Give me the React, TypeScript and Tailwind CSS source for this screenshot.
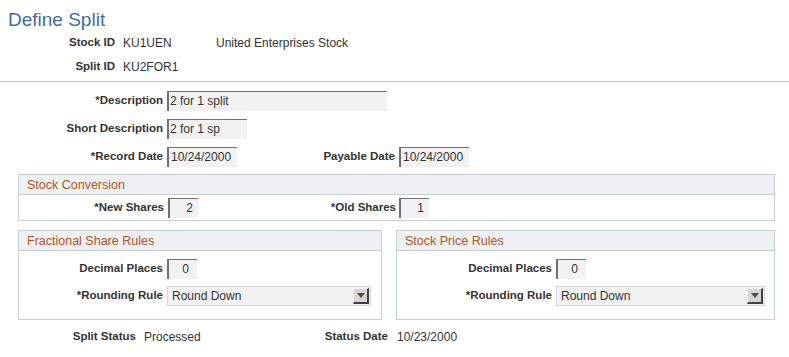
import React from "react";

function Field({ value, className }: { value: string; className: string }) {
  return (
    <div
      className={
        "h-[20px] bg-[#f2f2f2] border-t border-l-2 border-t-[#707070] border-l-[#707070] leading-[19px] text-[12px] font-normal text-[#333] " +
        className
      }
    >
      {value}
    </div>
  );
}

function Select({ value, className }: { value: string; className: string }) {
  return (
    <div
      className={
        "h-[20px] flex items-center bg-[#f2f2f2] border border-[#d6d6d6] " +
        className
      }
    >
      <div className="flex-1 pl-[4px] text-[12px] leading-[18px]">{value}</div>
      <div className="w-[16px] h-[16px] mr-[1px] flex items-center justify-center bg-[#d8d6d0] border-t border-l border-t-[#f4f4f4] border-l-[#f4f4f4] border-r-2 border-b-2 border-r-[#404040] border-b-[#404040]">
        <svg width="8" height="5" viewBox="0 0 8 5">
          <path d="M0 0 L8 0 L4 5 Z" fill="#4a4a4a" />
        </svg>
      </div>
    </div>
  );
}

function Box({
  title,
  className,
  children,
}: {
  title: string;
  className: string;
  children: React.ReactNode;
}) {
  return (
    <div className={"border border-[#c8cfd5] " + className}>
      <div className="h-[20px] bg-[#edf1f4] border-b border-[#c8cfd5] pl-[8px] text-[12.5px] leading-[20px] text-[#b4541e]">
        {title}
      </div>
      {children}
    </div>
  );
}

function App() {
  return (
    <div className="w-[789px] h-[357px] bg-white overflow-hidden font-['Liberation_Sans',Arial,sans-serif] text-[12px] text-[#333]">
      <div className="pt-[8px] pl-[8px] text-[19px] leading-[23px] text-[#416ca3]">
        Define Split
      </div>

      <div className="flex items-center h-[24px]">
        <div className="w-[115px] text-right font-bold text-[11.5px]">Stock ID</div>
        <div className="ml-[8px] w-[93px]">KU1UEN</div>
        <div>United Enterprises Stock</div>
      </div>
      <div className="flex items-center h-[24px]">
        <div className="w-[115px] text-right font-bold text-[11.5px]">Split ID</div>
        <div className="ml-[8px]">KU2FOR1</div>
      </div>

      <div className="mt-[2px] border-t border-[#c4c4c4]" />

      <div className="mt-[9px] flex flex-col gap-[8px] font-bold text-[11.5px]">
        <div className="flex items-center h-[20px]">
          <div className="w-[163px] text-right">*Description</div>
          <Field value="2 for 1 split" className="ml-[4px] w-[220px] pl-[1px]" />
        </div>
        <div className="flex items-center h-[20px]">
          <div className="w-[163px] text-right">Short Description</div>
          <Field value="2 for 1 sp" className="ml-[4px] w-[80px] pl-[1px]" />
        </div>
        <div className="flex items-center h-[20px]">
          <div className="w-[163px] text-right">*Record Date</div>
          <Field value="10/24/2000" className="ml-[4px] w-[70px] pl-[2px]" />
          <div className="w-[158px] text-right">Payable Date</div>
          <Field value="10/24/2000" className="ml-[4px] w-[70px] pl-[2px]" />
        </div>
      </div>

      <Box title="Stock Conversion" className="mt-[7px] ml-[18px] w-[757px]">
        <div className="flex items-center h-[25px] font-bold text-[11.5px]">
          <div className="w-[145px] text-right">*New Shares</div>
          <Field value="2" className="ml-[4px] w-[30px] text-right pr-[5px]" />
          <div className="w-[198px] text-right">*Old Shares</div>
          <Field value="1" className="ml-[3px] w-[30px] text-right pr-[5px]" />
        </div>
      </Box>

      <div className="mt-[9px] ml-[18px] flex gap-[14px]">
        <Box title="Fractional Share Rules" className="w-[364px]">
          <div className="h-[68px] pt-[8px] flex flex-col gap-[7px] font-bold text-[11.5px]">
            <div className="flex items-center h-[20px]">
              <div className="w-[144px] text-right">Decimal Places</div>
              <Field value="0" className="ml-[4px] w-[30px] text-right pr-[8px]" />
            </div>
            <div className="flex items-center h-[20px]">
              <div className="w-[144px] text-right">*Rounding Rule</div>
              <Select value="Round Down" className="ml-[4px] w-[204px] font-normal" />
            </div>
          </div>
        </Box>
        <Box title="Stock Price Rules" className="w-[379px]">
          <div className="h-[68px] pt-[8px] flex flex-col gap-[7px] font-bold text-[11.5px]">
            <div className="flex items-center h-[20px]">
              <div className="w-[155px] text-right">Decimal Places</div>
              <Field value="0" className="ml-[4px] w-[30px] text-right pr-[8px]" />
            </div>
            <div className="flex items-center h-[20px]">
              <div className="w-[155px] text-right">*Rounding Rule</div>
              <Select value="Round Down" className="ml-[4px] w-[209px] font-normal" />
            </div>
          </div>
        </Box>
      </div>

      <div className="mt-[7px] flex items-center h-[20px]">
        <div className="w-[136px] text-right font-bold text-[11.5px]">Split Status</div>
        <div className="ml-[8px] w-[150px]">Processed</div>
        <div className="w-[94px] text-right font-bold text-[11.5px]">Status Date</div>
        <div className="ml-[9px]">10/23/2000</div>
      </div>
    </div>
  );
}

export default App;
